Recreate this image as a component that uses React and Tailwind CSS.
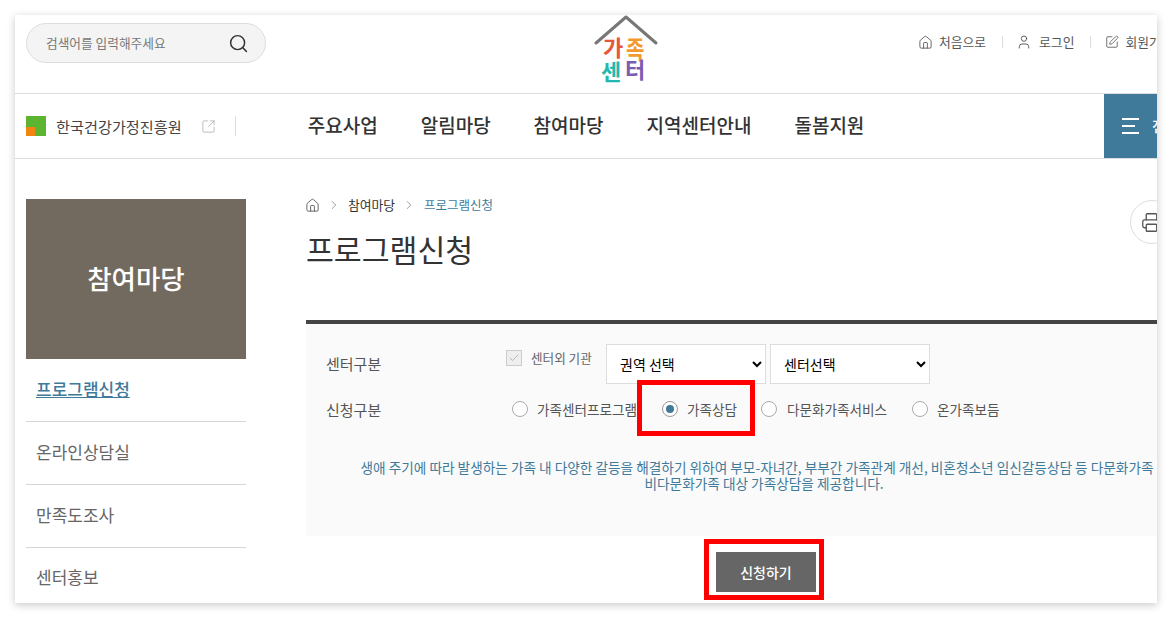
import React from "react";
import { Search, House, User, SquarePen, ChevronRight, Printer, SquareArrowOutUpRight, Check } from "lucide-react";

const font = { fontFamily: '"Noto Sans CJK KR", "Noto Sans", sans-serif' };

function Logo() {
  return (
    <svg width="70" height="72" viewBox="0 0 70 72" className="block">
      <path d="M3 28 L33 2 L63 28" fill="none" stroke="#777" strokeWidth="3" strokeLinecap="round" strokeLinejoin="round" />
      <text x="10" y="41" fontSize="22" fontWeight="700" fill="#e8553a" style={font}>가</text>
      <text transform="translate(33 44) scale(1 1.25)" fontSize="20" fontWeight="700" fill="#f29a2e" style={font}>족</text>
      <text x="8" y="65" fontSize="22" fontWeight="700" fill="#22b8b0" style={font}>센</text>
      <text x="32" y="63" fontSize="22" fontWeight="700" fill="#7a5cb0" style={font}>터</text>
    </svg>
  );
}

function TopLink({ icon, label, last, gap = 6, mr = 13 }) {
  return (
    <div className="flex items-center shrink-0">
      {icon}
      <span className="text-[12.8px] text-[#555] whitespace-nowrap" style={{ marginLeft: gap }}>{label}</span>
      {!last && <span className="ml-[16px] h-[12px] w-px bg-[#ddd]" style={{ marginRight: mr }} />}
    </div>
  );
}

function Radio({ label, checked, w, gap = 9 }) {
  return (
    <div className="flex items-center shrink-0" style={{ width: w }}>
      <span className={"flex items-center justify-center w-[16px] h-[16px] rounded-full border bg-white " + (checked ? "border-[#999]" : "border-[#aaa]")}>
        {checked && <span className="w-[8px] h-[8px] rounded-full bg-[#3f7a9b]" />}
      </span>
      <span className="text-[13.6px] text-[#555] whitespace-nowrap" style={{ marginLeft: gap }}>{label}</span>
    </div>
  );
}

function SideItem({ label, active, last }) {
  return (
    <div className={"h-[63px] flex items-center pl-[10px] text-[17px] " + (last ? "pb-[5px] " : "pb-[2px] border-b border-[#d4d4d4] ") + (active ? "text-[#3f7a9b] font-medium" : "text-[#666]")}>
      <span className={active ? "underline underline-offset-1" : ""}>{label}</span>
    </div>
  );
}

export default function App() {
  return (
    <div className="w-[1172px] h-[618px] bg-white p-[15px] overflow-hidden" style={font}>
      <div className="relative w-[1142px] h-[588px] bg-white overflow-hidden shadow-[0_2px_8px_rgba(0,0,0,0.22)]">
        {/* top header */}
        <div className="h-[79px] border-b border-[#ddd] flex items-start pl-[11px] relative">
          <div className="mt-[8px] w-[240px] h-[40px] shrink-0 rounded-full bg-[#f4f4f4] border border-[#ddd] flex items-center pl-[19px] pr-[16px] justify-between">
            <span className="text-[12.7px] text-[#777]">검색어를 입력해주세요</span>
            <Search size={21} strokeWidth={1.7} className="text-[#333]" />
          </div>
          <div className="ml-[327px] mt-0 shrink-0 w-[70px]">
            <Logo />
          </div>
          <div className="ml-[255px] mt-[19px] flex items-center h-[16px] shrink-0">
            <TopLink icon={<House size={15} strokeWidth={1.4} className="text-[#555]" />} label="처음으로" />
            <TopLink icon={<User size={16} strokeWidth={1.4} className="text-[#555]" />} label="로그인" gap={7} mr={14} />
            <TopLink icon={<SquarePen size={14} strokeWidth={1.4} className="text-[#555]" />} label="회원가입" last />
          </div>
        </div>
        {/* nav */}
        <div className="h-[65px] border-b border-[#ddd] flex items-center pl-[11px] relative">
          <span className="relative w-[20px] h-[20px] bg-[#5cb531] shrink-0">
            <span className="absolute left-0 bottom-0 w-[9px] h-[9px] bg-[#f28410]" />
          </span>
          <span className="ml-[10px] text-[15.2px] text-[#444] whitespace-nowrap">한국건강가정진흥원</span>
          <SquareArrowOutUpRight size={15} strokeWidth={1.2} className="ml-[19px] text-[#aaa] shrink-0" />
          <span className="ml-[19px] h-[20px] w-px bg-[#ddd] shrink-0" />
          <nav className="ml-[72px] pb-[2px] flex gap-[43px] text-[19px] font-medium text-[#333] whitespace-nowrap">
            <span>주요사업</span>
            <span>알림마당</span>
            <span>참여마당</span>
            <span>지역센터안내</span>
            <span>돌봄지원</span>
          </nav>
          <div className="absolute left-[1089px] top-0 w-[120px] h-[64px] bg-[#3f7a9b] flex items-center pl-[18px] text-white">
            <span className="flex flex-col gap-[5px] items-start">
              <span className="block w-[17px] h-[2px] bg-white" />
              <span className="block w-[13px] h-[2px] bg-white" />
              <span className="block w-[17px] h-[2px] bg-white" />
            </span>
            <span className="ml-[13px] text-[15px] font-medium whitespace-nowrap">전체메뉴</span>
          </div>
        </div>
        {/* body */}
        <div className="flex pl-[11px]">
          <aside className="w-[220px] mt-[40px] shrink-0">
            <div className="h-[160px] bg-[#736a5f] flex items-center justify-center pb-[3px] text-white text-[26.5px] font-medium">참여마당</div>
            <SideItem label="프로그램신청" active />
            <SideItem label="온라인상담실" />
            <SideItem label="만족도조사" />
            <SideItem label="센터홍보" last />
          </aside>
          <main className="ml-[60px] w-[904px] shrink-0 relative">
            <div className="mt-[37px] flex items-center h-[18px] text-[#555]">
              <House size={15} strokeWidth={1.4} className="-ml-[1px]" />
              <ChevronRight size={14} strokeWidth={1.4} className="ml-[7px] text-[#888]" />
              <span className="ml-[7px] text-[12.8px] text-[#333]">참여마당</span>
              <ChevronRight size={14} strokeWidth={1.4} className="ml-[7px] text-[#888]" />
              <span className="ml-[8px] text-[12.5px] text-[#3f7a9b]">프로그램신청</span>
            </div>
            <h1 className="mt-[13px] text-[30.3px] leading-[44px] font-normal text-[#333]">프로그램신청</h1>
            <div className="absolute left-[824px] top-[41px] w-[44px] h-[44px] rounded-full border border-[#ddd] bg-white flex items-center justify-center">
              <Printer size={21} strokeWidth={1.5} className="text-[#555] -ml-[2px]" />
            </div>
            <section className="mt-[49px] border-t-4 border-[#444] bg-[#fafafa] h-[216px] relative">
              <div className="flex items-start pt-[20px] pl-[20px]">
                <span className="w-[180px] text-[15px] leading-[40px] text-[#555] shrink-0">센터구분</span>
                <div className="flex items-start shrink-0">
                  <span className="mt-[6px] w-[16px] h-[16px] bg-[#eee] border border-[#ccc] flex items-center justify-center">
                    <Check size={12} strokeWidth={1.6} className="text-[#aaa]" />
                  </span>
                  <span className="ml-[9px] mt-[4px] w-[75px] text-[12.6px] leading-[20px] text-[#666] whitespace-nowrap">센터외 기관</span>
                  <select defaultValue="a" className="w-[160px] h-[40px] pl-[9px] bg-white border border-[#ddd] text-[14px] text-black">
                    <option value="a">권역 선택</option>
                  </select>
                  <select defaultValue="b" className="ml-[4px] w-[160px] h-[40px] pl-[9px] bg-white border border-[#ddd] text-[14px] text-black">
                    <option value="b">센터선택</option>
                  </select>
                </div>
              </div>
              <div className="flex items-center mt-[5px] pl-[20px] h-[40px]">
                <span className="w-[186px] pt-[2px] text-[15px] text-[#555] shrink-0">신청구분</span>
                <Radio label="가족센터프로그램" w="150px" />
                <Radio label="가족상담" checked w="99px" />
                <Radio label="다문화가족서비스" w="151px" gap={10} />
                <Radio label="온가족보듬" w="120px" />
              </div>
              <p className="mt-[30px] -translate-x-[1px] text-center text-[13.67px] leading-[16px] text-[#3f7a9b] whitespace-nowrap">
                생애 주기에 따라 발생하는 가족 내 다양한 갈등을 해결하기 위하여 부모-자녀간, 부부간 가족관계 개선, 비혼청소년 임신갈등상담 등 다문화가족
                <br />
                <span className="pl-[14px]">비다문화가족 대상 가족상담을 제공합니다.</span>
              </p>
            </section>
            <div className="mt-[16px] ml-[410px] w-[100px] h-[40px] bg-[#666] flex items-center justify-center text-white text-[14px] font-medium">신청하기</div>
          </main>
        </div>
        {/* highlight boxes */}
        <div className="absolute left-[622px] top-[365px] w-[118px] h-[56px] border-[5px] border-[#ff0000]" />
        <div className="absolute left-[689px] top-[524px] w-[120px] h-[61px] border-[5px] border-[#ff0000]" />
      </div>
    </div>
  );
}
